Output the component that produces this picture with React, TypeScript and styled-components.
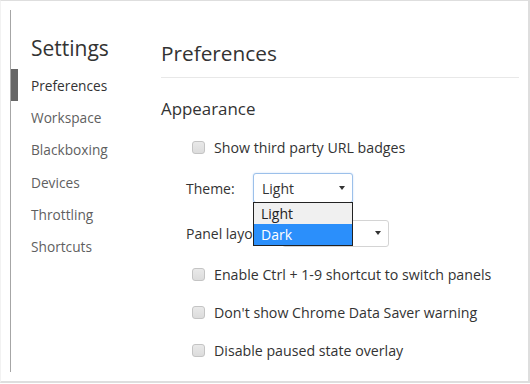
import React from "react";
import styled, { createGlobalStyle } from "styled-components";

const GlobalStyle = createGlobalStyle`
  html, body {
    margin: 0;
    padding: 0;
    background: #fff;
  }
  body {
    font-family: "Open Sans", "Noto Sans", sans-serif;
    color: #333;
  }
`;

const Frame = styled.div`
  box-sizing: border-box;
  width: 530px;
  height: 383px;
  border-top: 1px solid #dedede;
  border-right: 2px solid #dedede;
  border-bottom: 2px solid #dedede;
  border-left: 1px solid #f2f2f2;
  display: flex;
  padding-top: 9px;
`;

const Sidebar = styled.nav`
  width: 140px;
  margin-left: 9px;
  height: 362px;
  border-left: 1px solid #a6a6a6;
  display: flex;
  flex-direction: column;
`;

const SideTitle = styled.h1`
  margin: 23px 0 0 20px;
  font-size: 21px;
  font-weight: 400;
  line-height: 30px;
  color: #333;
`;

const SideList = styled.ul`
  list-style: none;
  margin: 6px 0 0;
  padding: 0;
`;

const SideItem = styled.li<{ $active?: boolean }>`
  height: 32.3px;
  display: flex;
  align-items: center;
  padding-left: ${(p) => (p.$active ? "13px" : "20px")};
  border-left: ${(p) => (p.$active ? "7px solid #666" : "none")};
  font-size: 13.7px;
  color: ${(p) => (p.$active ? "#333" : "#5f5f5f")};
`;

const Main = styled.main`
  flex: 1;
  padding: 27px 9px 0 10px;
  display: flex;
  flex-direction: column;
`;

const PageTitle = styled.h2`
  margin: 0;
  font-size: 20.8px;
  font-weight: 400;
  line-height: 32px;
  padding-bottom: 8px;
  border-bottom: 1px solid #e8e8e8;
  color: #333;
`;

const Section = styled.h3`
  margin: 18px 0 0;
  font-size: 16.9px;
  font-weight: 400;
  line-height: 26px;
  color: #333;
`;

const Rows = styled.div`
  display: flex;
  flex-direction: column;
  padding-left: 25px;
  margin-top: 12px;
`;

const CheckRow = styled.label<{ $h?: number }>`
  display: flex;
  align-items: center;
  gap: 9px;
  padding-left: 6px;
  height: ${(p) => p.$h ?? 38}px;
  font-size: 14.2px;
  color: #333;
`;

const Box = styled.span`
  box-sizing: border-box;
  width: 13px;
  height: 13px;
  border: 1px solid #c4c4c4;
  border-radius: 3px;
  background: linear-gradient(#e9e9e9, #dcdcdc);
`;

const SelectRow = styled.div<{ $h: number }>`
  display: flex;
  align-items: center;
  height: ${(p) => p.$h}px;
  font-size: 14px;
  color: #333;
`;

const SelectLabel = styled.span<{ $w: number }>`
  width: ${(p) => p.$w}px;
  flex-shrink: 0;
  white-space: nowrap;
`;

const SelectWrap = styled.div`
  position: relative;
`;

const Select = styled.div<{ $w: number; $focus?: boolean }>`
  box-sizing: border-box;
  width: ${(p) => p.$w}px;
  height: ${(p) => (p.$focus ? 30 : 27)}px;
  display: flex;
  align-items: center;
  justify-content: space-between;
  padding: 0 7px 0 8px;
  border: 1px solid ${(p) => (p.$focus ? "#9cc0ea" : "#d4d4d4")};
  border-radius: 3px;
  box-shadow: ${(p) => (p.$focus ? "0 0 2px #c5dbf5" : "none")};
  background: #fff;
  font-size: 14px;
  color: #333;
`;

const Caret = styled.span`
  margin-left: auto;
  width: 0;
  height: 0;
  border-left: 3.5px solid transparent;
  border-right: 3.5px solid transparent;
  border-top: 4px solid #333;
`;

const Popup = styled.ul`
  position: absolute;
  top: 29px;
  left: 0;
  box-sizing: border-box;
  width: 100px;
  margin: 0;
  padding: 0;
  list-style: none;
  border: 1px solid #222;
  background: #fff;
  z-index: 2;
`;

const Option = styled.li<{ $hl?: boolean }>`
  height: 21px;
  display: flex;
  align-items: center;
  padding-left: 7px;
  font-size: 14px;
  background: ${(p) => (p.$hl ? "#2b8ffb" : "#f0f0f0")};
  color: ${(p) => (p.$hl ? "#fff" : "#222")};
`;

const sideItems = ["Preferences", "Workspace", "Blackboxing", "Devices", "Throttling", "Shortcuts"];

export default function App() {
  return (
    <>
      <GlobalStyle />
      <Frame>
        <Sidebar>
          <SideTitle>Settings</SideTitle>
          <SideList>
            {sideItems.map((s, i) => (
              <SideItem key={s} $active={i === 0}>
                {s}
              </SideItem>
            ))}
          </SideList>
        </Sidebar>
        <Main>
          <PageTitle>Preferences</PageTitle>
          <Section>Appearance</Section>
          <Rows>
            <CheckRow $h={26}>
              <Box />
              Show third party URL badges
            </CheckRow>
            <SelectRow $h={56}>
              <SelectLabel $w={67}>Theme:</SelectLabel>
              <SelectWrap>
                <Select $w={100} $focus>
                  Light
                  <Caret />
                </Select>
                <Popup>
                  <Option>Light</Option>
                  <Option $hl>Dark</Option>
                </Popup>
              </SelectWrap>
            </SelectRow>
            <SelectRow $h={34}>
              <SelectLabel $w={96}>Panel layout:</SelectLabel>
              <Select $w={107}>
                <Caret />
              </Select>
            </SelectRow>
            <CheckRow $h={48}>
              <Box />
              Enable Ctrl + 1-9 shortcut to switch panels
            </CheckRow>
            <CheckRow $h={28}>
              <Box />
              Don't show Chrome Data Saver warning
            </CheckRow>
            <CheckRow $h={48}>
              <Box />
              Disable paused state overlay
            </CheckRow>
          </Rows>
        </Main>
      </Frame>
    </>
  );
}
